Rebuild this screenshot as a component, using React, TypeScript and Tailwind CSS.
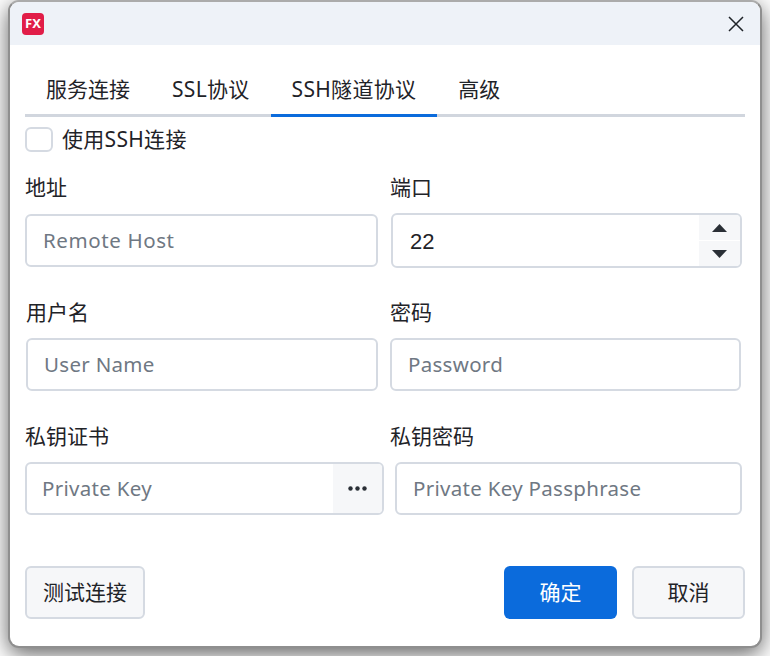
function Label({ children, className = "" }: { children: React.ReactNode; className?: string }) {
  return <div className={"h-[24px] leading-[26px] text-[21px] text-[#1f2328] " + className}>{children}</div>;
}
function Box({ placeholder, className = "" }: { placeholder: string; className?: string }) {
  return (
    <div className={"h-[53px] flex items-center border-2 border-[#d5dae2] rounded-[6px] bg-white pl-[16px] text-[20.5px] text-[#6f7883] tracking-[0.3px] " + className}>
      {placeholder}
    </div>
  );
}
export default function App() {
  return (
    <div className="w-[770px] h-[656px] overflow-hidden bg-white pl-[8px] font-['Noto_Sans','Noto_Sans_CJK_SC',sans-serif]">
      <div className="w-[754px] h-[648px] rounded-[11px] bg-white border-2 border-[#8f8f8f] border-t-[#ababab] shadow-[0_6px_22px_rgba(0,0,0,0.62)] flex flex-col overflow-hidden">
        <div className="h-[43px] shrink-0 bg-[#eef2f8] flex items-center justify-between pl-[12px] pr-[16px]">
          <div className="w-[22px] h-[22px] rounded-[4px] bg-[#e11d48] text-white text-[13px] font-bold flex items-center justify-center">FX</div>
          <svg width="16" height="16" viewBox="0 0 16 16" stroke="#1f2328" strokeWidth="1.5"><path d="M1 1 L15 15 M15 1 L1 15" /></svg>
        </div>
        <div className="flex-1 px-[15px] flex flex-col">
          <div className="mt-[26px] h-[46px] flex border-b-[3px] border-[#d1d6de] text-[21px] text-[#1f2328]">
            <div className="px-[21px] h-[46px] leading-[36px]">服务连接</div>
            <div className="px-[21px] h-[46px] leading-[36px] tracking-[0.3px]">SSL协议</div>
            <div className="px-[21px] h-[46px] leading-[36px] tracking-[0.3px] border-b-[3px] border-[#0b6bdc]">SSH隧道协议</div>
            <div className="px-[21px] h-[46px] leading-[36px]">高级</div>
          </div>
          <div className="mt-[10px] flex items-center h-[25px] gap-[9px] text-[21px] text-[#1f2328] tracking-[0.3px]">
            <div className="w-[28px] h-[25px] border-2 border-[#d5dae2] rounded-[6px]" />
            使用SSH连接
          </div>
          <div className="mt-[22px] grid grid-cols-[353px_351px] gap-x-[13px]">
            <div>
              <Label>地址</Label>
              <Box placeholder="Remote Host" className="mt-[16px] tracking-[0.6px]" />
            </div>
            <div>
              <Label className="-ml-[1px]">端口</Label>
              <div className="mt-[15px] h-[55px] flex border-2 border-[#d5dae2] rounded-[6px] overflow-hidden">
                <div className="flex-1 flex items-center pl-[17px] pt-[2px] text-[22px] text-[#1f2328] font-['Liberation_Sans']">22</div>
                <div className="w-[41px] flex flex-col gap-[1px]">
                  <div className="flex-1 bg-[#f6f7f9] flex items-center justify-center"><svg width="15" height="8" viewBox="0 0 15 8"><path d="M7.5 0 L15 8 L0 8 Z" fill="#2a2f36" /></svg></div>
                  <div className="flex-1 bg-[#f6f7f9] flex items-center justify-center"><svg width="15" height="8" viewBox="0 0 15 8"><path d="M0 0 L15 0 L7.5 8 Z" fill="#2a2f36" /></svg></div>
                </div>
              </div>
            </div>
          </div>
          <div className="mt-[31px] ml-[1px] grid grid-cols-[352px_351px] gap-x-[12px]">
            <div>
              <Label>用户名</Label>
              <Box placeholder="User Name" className="mt-[15px]" />
            </div>
            <div>
              <Label>密码</Label>
              <Box placeholder="Password" className="mt-[15px]" />
            </div>
          </div>
          <div className="mt-[32px] grid grid-cols-[359px_347px] gap-x-[11px]">
            <div>
              <Label>私钥证书</Label>
              <div className="mt-[15px] h-[53px] flex border-2 border-[#d5dae2] rounded-[6px] overflow-hidden">
                <div className="flex-1 flex items-center pl-[15px] text-[20.5px] text-[#6f7883] tracking-[0.3px]">Private Key</div>
                <div className="w-[49px] bg-[#f6f7f9] flex items-center justify-center">
                  <svg width="19" height="5" viewBox="0 0 19 5" fill="#2a2f36"><circle cx="2.5" cy="2.5" r="2.2" /><circle cx="9.5" cy="2.5" r="2.2" /><circle cx="16.5" cy="2.5" r="2.2" /></svg>
                </div>
              </div>
            </div>
            <div>
              <Label className="-ml-[5px]">私钥密码</Label>
              <Box placeholder="Private Key Passphrase" className="mt-[15px]" />
            </div>
          </div>
          <div className="mt-[51px] flex items-center gap-[15px]">
            <div className="w-[120px] h-[53px] flex items-center justify-center border-2 border-[#d5dae2] rounded-[6px] bg-[#f6f7f9] text-[21px] text-[#1f2328] mr-auto">测试连接</div>
            <div className="w-[113px] h-[53px] flex items-center justify-center rounded-[6px] bg-[#0b6bdc] text-[21px] text-white">确定</div>
            <div className="w-[113px] h-[53px] flex items-center justify-center border-2 border-[#d5dae2] rounded-[6px] bg-[#f6f7f9] text-[21px] text-[#1f2328]">取消</div>
          </div>
        </div>
      </div>
    </div>
  );
}
